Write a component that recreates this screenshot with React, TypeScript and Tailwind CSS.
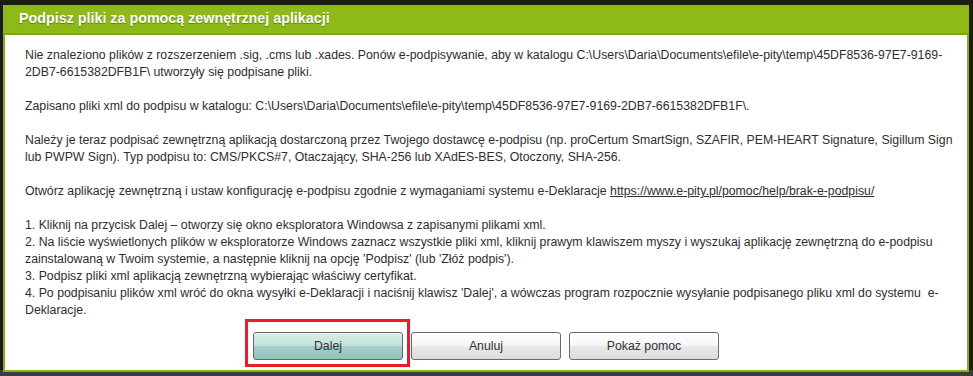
export default function App() {
  return (
    <div className="relative w-[973px] h-[376px] overflow-hidden bg-[#1b1c12] font-['Liberation_Sans',Arial,sans-serif]">
      {/* dark page behind the modal */}
      <div className="absolute left-0 right-0 bottom-0 h-[6px] bg-[#3b3b3b]" />

      {/* Modal */}
      <div className="absolute left-[3px] top-[5px] w-[966px] h-[367px] flex flex-col border-x-2 border-b-2 border-[#86b112] bg-white">
        {/* Header */}
        <div className="-mx-[2px] h-[30px] shrink-0 flex items-center pl-[16px] bg-[#8dba16] border-b-2 border-[#7ea512]">
          <h2 className="text-white font-bold text-[14.3px] [text-shadow:0_1px_1px_rgba(0,0,0,0.35)]">
            Podpisz pliki za pomocą zewnętrznej aplikacji
          </h2>
        </div>

        {/* Content */}
        <div className="flex-1 flex flex-col pl-[20px] pr-[6px] pt-[12px] text-[12.3px] leading-[17px] text-[#2e2e2e]">
          <p>
            Nie znaleziono plików z rozszerzeniem .sig, .cms lub .xades. Ponów e-podpisywanie, aby w katalogu C:\Users\Daria\Documents\efile\e-pity\temp\45DF8536-97E7-9169-2DB7-6615382DFB1F\ utworzyły się podpisane pliki.
          </p>
          <br />
          <p>
            Zapisano pliki xml do podpisu w katalogu: C:\Users\Daria\Documents\efile\e-pity\temp\45DF8536-97E7-9169-2DB7-6615382DFB1F\.
          </p>
          <br />
          <p>
            Należy je teraz podpisać zewnętrzną aplikacją dostarczoną przez Twojego dostawcę e-podpisu (np. proCertum SmartSign, SZAFIR, PEM-HEART Signature, Sigillum Sign lub PWPW Sign). Typ podpisu to: CMS/PKCS#7, Otaczający, SHA-256 lub XAdES-BES, Otoczony, SHA-256.
          </p>
          <br />
          <p>
            Otwórz aplikację zewnętrzną i ustaw konfigurację e-podpisu zgodnie z wymaganiami systemu e-Deklaracje{' '}
            <a href="#" className="underline text-[#2e2e2e]">https://www.e-pity.pl/pomoc/help/brak-e-podpisu/</a>
          </p>
          <br />
          <p>1. Kliknij na przycisk Dalej – otworzy się okno eksploratora Windowsa z zapisanymi plikami xml.</p>
          <p>
            2. Na liście wyświetlonych plików w eksploratorze Windows zaznacz wszystkie pliki xml, kliknij prawym klawiszem myszy i wyszukaj aplikację zewnętrzną do e-podpisu zainstalowaną w Twoim systemie, a następnie kliknij na opcję 'Podpisz' (lub 'Złóż podpis').
          </p>
          <p>3. Podpisz pliki xml aplikacją zewnętrzną wybierając właściwy certyfikat.</p>
          <p>
            4. Po podpisaniu plików xml wróć do okna wysyłki e-Deklaracji i naciśnij klawisz 'Dalej', a wówczas program rozpocznie wysyłanie podpisanego pliku xml do systemu&nbsp; e-<wbr />Deklaracje.
          </p>

          {/* Buttons */}
          <div className="mt-auto mb-[10px] -ml-[14px] flex justify-center gap-[8px]">
            <div className="relative">
              <button className="w-[150px] h-[28px] rounded-[3px] border border-[#5f6a68] bg-[linear-gradient(#d6ede6_0%,#c4e2da_48%,#a5cfca_52%,#92c2bd_100%)] text-[12.3px] text-[#2f2f3a] shadow-[inset_0_1px_0_rgba(255,255,255,0.6)]">
                Dalej
              </button>
              {/* red annotation frame */}
              <div className="absolute -left-[8px] -top-[13px] w-[165px] h-[48px] border-[3px] border-[#ed1c24] pointer-events-none" />
            </div>
            <button className="w-[150px] h-[28px] rounded-[3px] border border-[#6b6b6b] bg-[linear-gradient(#ffffff_0%,#f6f6f6_48%,#e9e9e9_52%,#dcdcdc_100%)] text-[12.3px] text-[#2f2f3a]">
              Anuluj
            </button>
            <button className="w-[150px] h-[28px] rounded-[3px] border border-[#6b6b6b] bg-[linear-gradient(#ffffff_0%,#f6f6f6_48%,#e9e9e9_52%,#dcdcdc_100%)] text-[12.3px] text-[#2f2f3a]">
              Pokaż pomoc
            </button>
          </div>
        </div>
      </div>
    </div>
  );
}
